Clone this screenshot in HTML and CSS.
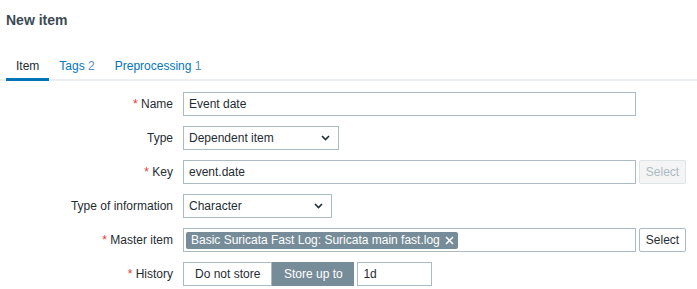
FILE: index.html
```html
<!DOCTYPE html>
<html lang="en">
<head>
    <meta charset="UTF-8">
    <title>New item</title>
    <link rel="stylesheet" href="styles.css">
</head>
<body>
    <div class="page">
        <h1 class="page-title">New item</h1>

        <ul class="tabs">
            <li class="tab active">Item</li>
            <li class="tab">Tags <span class="tab-count">2</span></li>
            <li class="tab">Preprocessing <span class="tab-count">1</span></li>
        </ul>

        <form class="item-form">
            <label class="form-label"><span class="req">*</span> Name</label>
            <div class="form-field">
                <input class="text-input wide" type="text" value="Event date">
            </div>

            <label class="form-label">Type</label>
            <div class="form-field">
                <div class="select type-select">
                    <span>Dependent item</span>
                    <svg class="chevron" width="9" height="6" viewBox="0 0 9 6"><path d="M1 1 L4.5 4.5 L8 1" fill="none" stroke="#1f2c33" stroke-width="1.6"/></svg>
                </div>
            </div>

            <label class="form-label"><span class="req">*</span> Key</label>
            <div class="form-field">
                <input class="text-input wide" type="text" value="event.date">
                <button type="button" class="btn-select" disabled>Select</button>
            </div>

            <label class="form-label">Type of information</label>
            <div class="form-field">
                <div class="select info-select">
                    <span>Character</span>
                    <svg class="chevron" width="9" height="6" viewBox="0 0 9 6"><path d="M1 1 L4.5 4.5 L8 1" fill="none" stroke="#1f2c33" stroke-width="1.6"/></svg>
                </div>
            </div>

            <label class="form-label"><span class="req">*</span> Master item</label>
            <div class="form-field">
                <div class="multiselect wide">
                    <span class="chip">Basic Suricata Fast Log: Suricata main fast.log
                        <svg class="chip-close" width="9" height="9" viewBox="0 0 9 9"><path d="M1 1 L8 8 M8 1 L1 8" stroke="#fff" stroke-width="1.6"/></svg>
                    </span>
                </div>
                <button type="button" class="btn-select">Select</button>
            </div>

            <label class="form-label"><span class="req">*</span> History</label>
            <div class="form-field">
                <div class="segmented">
                    <span class="segment">Do not store</span>
                    <span class="segment on">Store up to</span>
                </div>
                <input class="text-input period" type="text" value="1d">
            </div>
        </form>
    </div>
</body>
</html>
```

FILE: styles.css
```css
body {
    margin: 0;
    font-family: "Liberation Sans", Arial, sans-serif;
    font-size: 12px;
    color: #1f2c33;
    background-color: white;
}
.page {
    padding: 11px 0 0;
}
.page-title {
    margin: 0 0 0 6px;
    font-size: 14px;
    line-height: 18px;
    font-weight: bold;
    color: #3b4a54;
}
.tabs {
    list-style: none;
    display: flex;
    margin: 21px 0 0;
    padding: 0 0 0 6px;
    border-bottom: 2px solid #ebeef0;
}
.tab {
    padding: 9px 10px 5px;
    line-height: 14px;
    color: #0275b8;
    border-bottom: 3px solid transparent;
    margin-bottom: -2px;
}
.tab.active {
    color: #1f2c33;
    border-bottom-color: #0275b8;
}
.tab-count {
    color: #5a8eb5;
}
.item-form {
    display: grid;
    grid-template-columns: 173px 1fr;
    column-gap: 10px;
    row-gap: 10px;
    padding-top: 11px;
}
.form-label {
    text-align: right;
    line-height: 24px;
    white-space: nowrap;
}
.req {
    color: #e33734;
}
.form-field {
    display: flex;
    align-items: center;
    gap: 3px;
    height: 24px;
}
.text-input {
    box-sizing: border-box;
    height: 24px;
    margin: 0;
    padding: 0 5px;
    border: 1px solid #acbbc2;
    border-radius: 0;
    font-family: inherit;
    font-size: 12px;
    color: #1f2c33;
    background: white;
}
.wide {
    width: 453px;
}
.period {
    width: 75px;
}
.select {
    box-sizing: border-box;
    display: flex;
    align-items: center;
    justify-content: space-between;
    height: 24px;
    padding: 0 8px 0 5px;
    border: 1px solid #acbbc2;
}
.type-select {
    width: 156px;
}
.info-select {
    width: 149px;
}
.btn-select {
    box-sizing: border-box;
    height: 24px;
    width: 47px;
    padding: 0;
    border: 1px solid #acbbc2;
    border-radius: 2px;
    background: white;
    font-family: inherit;
    font-size: 12px;
    color: #1f2c33;
}
.btn-select:disabled {
    background: #f4f4f4;
    border-color: #dfe4e7;
    color: #acbbc2;
}
.multiselect {
    box-sizing: border-box;
    display: flex;
    align-items: center;
    height: 24px;
    padding: 0 2px;
    border: 1px solid #acbbc2;
}
.chip {
    display: inline-flex;
    align-items: center;
    gap: 5px;
    height: 17px;
    padding: 0 4px 0 5px;
    border-radius: 2px;
    background-color: #768d99;
    color: white;
    white-space: nowrap;
}
.segmented {
    display: flex;
    height: 24px;
}
.segment {
    box-sizing: border-box;
    height: 24px;
    line-height: 22px;
    padding: 0 11px;
    border: 1px solid #acbbc2;
    background: white;
}
.segment.on {
    width: 82px;
    text-align: center;
    padding: 0;
    border-color: #768d99;
    background-color: #768d99;
    color: white;
}
```
